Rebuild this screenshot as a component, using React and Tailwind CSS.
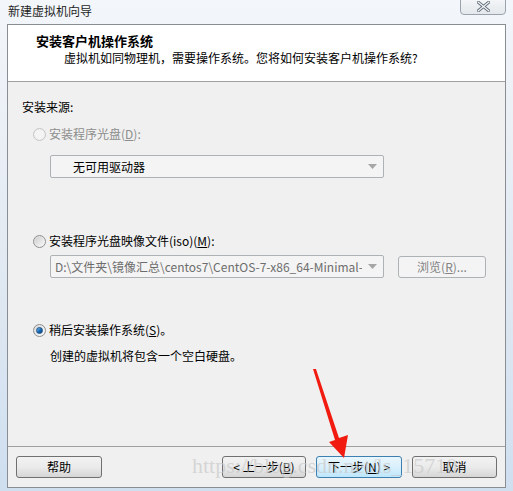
import React from 'react'

const font = { fontFamily: '"Noto Sans CJK SC", "Noto Sans", sans-serif' }

const Radio = ({ checked, disabled }) => (
  <span
    className={`w-[13px] h-[13px] rounded-full border flex items-center justify-center shrink-0 ${
      disabled ? 'border-[#c5c5c5] bg-[#f0f0f0]' : 'border-[#8e8f8f] bg-gradient-to-br from-[#d9d9d9] to-[#fbfbfb]'
    }`}
  >
    {checked ? (
      <span className="w-[7px] h-[7px] rounded-full bg-gradient-to-br from-[#7fc4f6] via-[#1a6fba] to-[#0b3f7c] border border-[#1b4f86]" />
    ) : (
      <span className={`w-[9px] h-[9px] rounded-full ${disabled ? 'bg-[#f4f4f4]' : 'bg-gradient-to-br from-[#cfcfcf] to-[#f7f7f7]'}`} />
    )}
  </span>
)

const Caret = () => (
  <svg width="9" height="5" viewBox="0 0 9 5" className="shrink-0">
    <path d="M0 0 L9 0 L4.5 5 Z" fill="#a6a6a6" />
  </svg>
)

const Button = ({ children, focus, disabled, className = '' }) => (
  <div
    className={`h-[22px] rounded-[3px] border flex items-center justify-center text-[12px] ${
      focus
        ? 'border-[#3c7fb1] bg-gradient-to-b from-[#eaf6fd] via-[#d9f0fc] to-[#bee6fd]'
        : disabled
        ? 'border-[#adb2b5] bg-[#f4f4f4] text-[#838383]'
        : 'border-[#707070] bg-gradient-to-b from-[#f2f2f2] via-[#ebebeb] to-[#d6d6d6]'
    } ${className}`}
  >
    {children}
  </div>
)

export default function App() {
  return (
    <div
      className="w-[513px] h-[491px] relative overflow-hidden bg-gradient-to-b from-[#f3f6fa] via-[#e3eaf2] to-[#cfdff0] flex flex-col text-black"
      style={font}
    >
      {/* title bar */}
      <div className="h-[24px] relative shrink-0">
        <div className="pl-[8px] pt-[3px] text-[12px] leading-[16px] text-[#1e1e1e]">新建虚拟机向导</div>
        <div className="absolute right-[7px] top-[-2px] w-[46px] h-[17px] rounded-b-[4px] border border-[#9aa3ad] bg-gradient-to-b from-[#f4f6f8] to-[#e4e8ec] flex items-center justify-center">
          <svg width="13" height="11" viewBox="0 0 13 11">
            <path d="M1 1 L12 10 M12 1 L1 10" stroke="#5f6a76" strokeWidth="3" strokeLinecap="round" />
            <path d="M1 1 L12 10 M12 1 L1 10" stroke="#f3f5f7" strokeWidth="1.2" strokeLinecap="round" />
          </svg>
        </div>
      </div>

      {/* client */}
      <div className="ml-[7px] w-[499px] h-[464px] border border-[#888e94] bg-[#f0f0f0] flex flex-col">
        <div className="h-[57px] bg-white border-b border-[#a0a0a0] pl-[28px] pt-[8px] shrink-0">
          <div className="text-[13px] leading-[16px] font-bold">安装客户机操作系统</div>
          <div className="pl-[28px] mt-[1px] text-[12px] leading-[16px]">虚拟机如同物理机，需要操作系统。您将如何安装客户机操作系统?</div>
        </div>

        <div className="flex-1 flex flex-col pl-[14px]">
          <div className="mt-[17px] text-[12px] leading-[16px]">安装来源:</div>

          <div className="mt-[11px] ml-[11px] h-[16px] flex items-center gap-[3px] text-[12px] text-[#8d8d8d]">
            <Radio disabled />
            <span>
              安装程序光盘(<span className="underline">D</span>):
            </span>
          </div>

          <div className="mt-[13px] ml-[28px] w-[334px] h-[23px] rounded-[2px] border border-[#adb2b5] bg-[#f4f4f4] flex items-center pl-[22px] pr-[6px] text-[12px]">
            <span className="flex-1">无可用驱动器</span>
            <Caret />
          </div>

          <div className="mt-[55px] ml-[11px] h-[16px] flex items-center gap-[3px] text-[12px]">
            <Radio />
            <span>
              安装程序光盘映像文件(iso)(<span className="underline">M</span>):
            </span>
          </div>

          <div className="mt-[6px] ml-[28px] flex items-center gap-[14px]">
            <div className="w-[334px] h-[23px] rounded-[2px] border border-[#adb2b5] bg-[#f4f4f4] flex items-center pl-[4px] pr-[6px] text-[12px] text-[#6d6d6d]">
              <span className="flex-1 overflow-hidden whitespace-nowrap">D:\文件夹\镜像汇总\centos7\CentOS-7-x86_64-Minimal-1</span>
              <span className="ml-[6px]">
                <Caret />
              </span>
            </div>
            <Button disabled className="w-[88px]">
              浏览(<span className="underline">R</span>)...
            </Button>
          </div>

          <div className="mt-[44px] ml-[11px] h-[16px] flex items-center gap-[3px] text-[12px]">
            <Radio checked />
            <span>
              稍后安装操作系统(<span className="underline">S</span>)。
            </span>
          </div>

          <div className="mt-[10px] ml-[28px] text-[12px] leading-[16px]">创建的虚拟机将包含一个空白硬盘。</div>
        </div>

        <div className="h-[41px] border-t border-[#a0a0a0] flex items-start pt-[9px] pl-[8px] shrink-0 relative">
          <Button className="w-[86px]">帮助</Button>
          <div className="ml-[120px] flex gap-[10px]">
            <Button className="w-[84px]">
              &lt; 上一步(<span className="underline">B</span>)
            </Button>
            <Button focus className="w-[86px]">
              下一步(<span className="underline">N</span>) &gt;
            </Button>
            <Button className="w-[85px]">取消</Button>
          </div>
          <div
            className="absolute left-[184px] top-[6px] text-[22px] leading-[26px] text-[#c9c9c9]/70 whitespace-nowrap pointer-events-none"
            style={{ fontFamily: '"Liberation Serif", serif' }}
          >
            https://blog.csdn.net/ls_15710
          </div>
        </div>
      </div>

      {/* red arrow overlay */}
      <svg className="absolute left-0 top-0 pointer-events-none" width="513" height="491" viewBox="0 0 513 491">
        <polygon points="313,369 316,369 339,438 348,435 344,458 329,442 335,440" fill="#f21b0f" />
      </svg>
    </div>
  )
}
